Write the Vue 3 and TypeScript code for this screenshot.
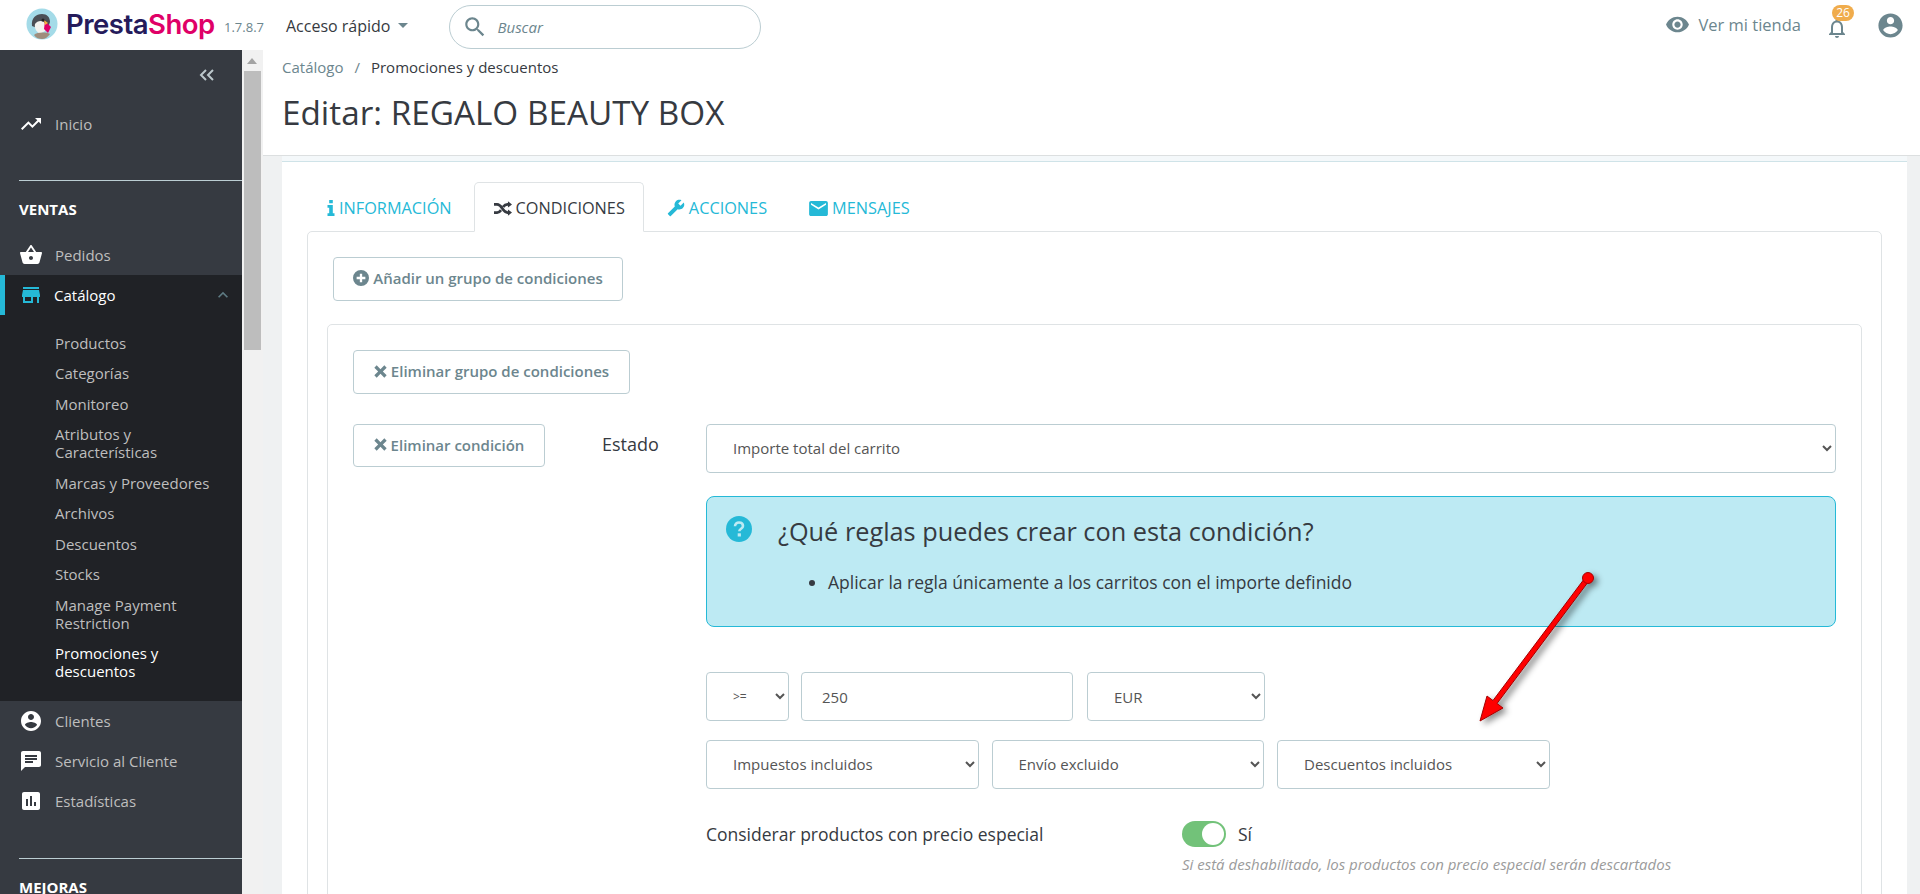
<script setup lang="ts">
interface NavItem { label: string; d: string }
const icons: Record<string, string> = {
  trend: 'M16 6l2.29 2.29-4.88 4.88-4-4L2 16.59 3.41 18l6-6 4 4 6.3-6.29L22 12V6z',
  basket: 'M17.21 9l-4.38-6.56c-.19-.28-.51-.42-.83-.42-.32 0-.64.14-.83.43L6.79 9H2c-.55 0-1 .45-1 1 0 .09.01.18.04.27l2.54 9.27c.23.84 1 1.46 1.92 1.46h13c.92 0 1.69-.62 1.93-1.46l2.54-9.27L23 10c0-.55-.45-1-1-1h-4.79zM9 9l3-4.4L15 9H9zm3 8c-1.1 0-2-.9-2-2s.9-2 2-2 2 .9 2 2-.9 2-2 2z',
  store: 'M20 4H4v2h16V4zm1 10v-2l-1-5H4l-1 5v2h1v6h10v-6h4v6h2v-6h1zm-9 4H6v-4h6v4z',
  account: 'M12 2C6.48 2 2 6.48 2 12s4.48 10 10 10 10-4.48 10-10S17.52 2 12 2zm0 3c1.66 0 3 1.34 3 3s-1.34 3-3 3-3-1.34-3-3 1.34-3 3-3zm0 14.2c-2.5 0-4.71-1.28-6-3.22.03-1.99 4-3.08 6-3.08 1.99 0 5.97 1.09 6 3.08-1.29 1.94-3.5 3.22-6 3.22z',
  chat: 'M20 2H4c-1.1 0-1.99.9-1.99 2L2 22l4-4h14c1.1 0 2-.9 2-2V4c0-1.1-.9-2-2-2zM6 9h12v2H6V9zm8 5H6v-2h8v2zm4-6H6V6h12v2z',
  stats: 'M19 3H5c-1.1 0-2 .9-2 2v14c0 1.1.9 2 2 2h14c1.1 0 2-.9 2-2V5c0-1.1-.9-2-2-2zM9 17H7v-7h2v7zm4 0h-2V7h2v10zm4 0h-2v-4h2v4z',
  eye: 'M12 4.5C7 4.5 2.73 7.61 1 12c1.73 4.39 6 7.5 11 7.5s9.27-3.11 11-7.5c-1.73-4.39-6-7.5-11-7.5zM12 17c-2.76 0-5-2.24-5-5s2.24-5 5-5 5 2.24 5 5-2.24 5-5 5zm0-8c-1.66 0-3 1.34-3 3s1.34 3 3 3 3-1.34 3-3-1.34-3-3-3z',
  bell: 'M12 22c1.1 0 2-.9 2-2h-4c0 1.1.89 2 2 2zm6-6v-5c0-3.07-1.64-5.64-4.5-6.32V4c0-.83-.67-1.5-1.5-1.5s-1.5.67-1.5 1.5v.68C7.63 5.36 6 7.92 6 11v5l-2 2v1h16v-1l-2-2zm-2 1H8v-6c0-2.48 1.51-4.5 4-4.5s4 2.02 4 4.5v6z',
  search: 'M15.5 14h-.79l-.28-.27C15.41 12.59 16 11.11 16 9.5 16 5.91 13.09 3 9.5 3S3 5.91 3 9.5 5.91 16 9.5 16c1.61 0 3.09-.59 4.23-1.57l.27.28v.79l5 4.99L20.49 19l-4.99-5zm-6 0C7.01 14 5 11.99 5 9.5S7.01 5 9.5 5 14 7.01 14 9.5 11.99 14 9.5 14z',
  up: 'M7.41 15.41L12 10.83l4.59 4.58L18 14l-6-6-6 6z',
  wrench: 'M22.7 19l-9.1-9.1c.9-2.3.4-5-1.5-6.9-2-2-5-2.4-7.4-1.3L9 6 6 9 1.6 4.7C.4 7.1.9 10.1 2.9 12.1c1.9 1.9 4.6 2.4 6.9 1.5l9.1 9.1c.4.4 1 .4 1.4 0l2.3-2.3c.5-.4.5-1.1.1-1.4z',
  mail: 'M20 4H4c-1.1 0-1.99.9-1.99 2L2 18c0 1.1.9 2 2 2h16c1.1 0 2-.9 2-2V6c0-1.1-.9-2-2-2zm0 4l-8 5-8-5V6l8 5 8-5v2z',
  plus: 'M12 1a11 11 0 1 0 0 22 11 11 0 0 0 0-22zm6 12.6h-4.4V18h-3.2v-4.4H6v-3.2h4.4V6h3.2v4.4H18z',
  times: 'M4.4 7.3 7.3 4.4 12 9.1l4.7-4.7 2.9 2.9L14.900 12l4.700 4.700-2.900 2.900L12 14.900l-4.700 4.700-2.900-2.900L9.100 12z'
}
const subItems: string[] = [
  'Productos', 'Categorías', 'Monitoreo', 'Atributos y Características', 'Marcas y Proveedores',
  'Archivos', 'Descuentos', 'Stocks', 'Manage Payment Restriction'
]
const afterCatalog: NavItem[] = [
  { label: 'Clientes', d: icons.account },
  { label: 'Servicio al Cliente', d: icons.chat },
  { label: 'Estadísticas', d: icons.stats }
]
</script>

<template>
  <div class="app">
    <header class="topbar">
      <svg class="logo" viewBox="0 0 32 32" width="32" height="32">
        <circle cx="16" cy="16" r="15.500" fill="#a4dbe8" />
        <path d="M6 18c-1-8 4-12 10-12 5 0 8 3 8 8l-1 3-9-2-3 5z" fill="#4b4f55" />
        <path d="M9 16c2-3 6-4 9-2l2 3-1 6-5 3c-3-2-6-5-5-10z" fill="#f4f3ef" />
        <path d="M19 13l6 6-3 6-4-4z" fill="#df0067" />
        <path d="M18 12l4 3-3 2z" fill="#f6b33c" />
        <path d="M8 27c3-3 12-3 16-1-2 3-5 5-8 5s-6-1-8-4z" fill="#9f8d7c" />
        <circle cx="17" cy="12" r="1.500" fill="#222" />
      </svg>
      <div class="wordmark"><span class="presta">Presta</span><span class="shop">Shop</span></div>
      <span class="version">1.7.8.7</span>
      <span class="quick">Acceso rápido<i class="caret"></i></span>
      <div class="search">
        <svg viewBox="0 0 24 24" width="26" height="26"><path :d="icons.search" fill="#6c868e" /></svg>
        <em>Buscar</em>
      </div>
      <div class="top-right">
        <svg class="eye" viewBox="0 0 24 24" width="25" height="25"><path :d="icons.eye" fill="#6c868e" /></svg>
        <span class="store-link">Ver mi tienda</span>
        <div class="bell">
          <svg viewBox="0 0 24 24" width="24" height="24"><path :d="icons.bell" fill="#6c868e" /></svg>
          <span class="badge">26</span>
        </div>
        <svg class="avatar" viewBox="0 0 24 24" width="29" height="29"><path :d="icons.account" fill="#6c868e" /></svg>
      </div>
    </header>

    <div class="body">
      <nav class="sidebar">
        <div class="collapse">
          <svg viewBox="0 0 16 12" width="16" height="12"><path d="M7 1 2 6l5 5M14 1 9 6l5 5" fill="none" stroke="#bcc8cc" stroke-width="2" /></svg>
        </div>
        <div class="nav-item home">
          <svg viewBox="0 0 24 24" width="24" height="24"><path :d="icons.trend" fill="#fff" /></svg>
          <span>Inicio</span>
        </div>
        <div class="rule first"></div>
        <div class="section">VENTAS</div>
        <div class="nav-item">
          <svg viewBox="0 0 24 24" width="24" height="24"><path :d="icons.basket" fill="#fff" /></svg>
          <span>Pedidos</span>
        </div>
        <div class="catalog">
          <div class="catalog-head">
            <svg viewBox="0 0 24 24" width="24" height="24"><path :d="icons.store" fill="#25b9d7" /></svg>
            <span>Catálogo</span>
            <svg class="chev" viewBox="0 0 24 24" width="20" height="20"><path :d="icons.up" fill="#5e7b83" /></svg>
          </div>
          <ul class="sub">
            <li v-for="s in subItems" :key="s">{{ s }}</li>
            <li class="current">Promociones y descuentos</li>
          </ul>
        </div>
        <div v-for="item in afterCatalog" :key="item.label" class="nav-item">
          <svg viewBox="0 0 24 24" width="24" height="24"><path :d="item.d" fill="#fff" /></svg>
          <span>{{ item.label }}</span>
        </div>
        <div class="rule second"></div>
        <div class="section">MEJORAS</div>
      </nav>

      <div class="scroll"><i class="scroll-up"></i><div class="thumb"></div></div>

      <main class="main">
        <div class="page-head">
          <div class="crumbs"><span class="c1">Catálogo</span><span class="slash">/</span><span class="c2">Promociones y descuentos</span></div>
          <h1>Editar: REGALO BEAUTY BOX</h1>
        </div>
        <div class="content">
          <div class="card">
            <div class="band"></div>
            <div class="card-body">
              <ul class="tabs">
                <li>
                  <svg viewBox="0 0 8 16" width="8" height="16"><path d="M2.200 0h3.600v3.200H2.200zM.5 5h5.300v8.200h1.700V16H.5v-2.800h1.700V7.800H.5z" fill="#25b9d7" /></svg>
                  INFORMACIÓN
                </li>
                <li class="active">
                  <svg viewBox="0 0 20 16" width="18" height="15"><path d="M0 3.500h3.500C9 3.500 9.500 12.500 15 12.500h1M0 12.500h3.500c2 0 3.200-1.200 4.300-2.700M10.200 6.200C11.300 4.700 13 3.500 15 3.500h1" fill="none" stroke="#363a41" stroke-width="3" /><path d="M15.500 0 20 3.500 15.500 7zM15.500 9 20 12.500 15.500 16z" fill="#363a41" /></svg>
                  CONDICIONES
                </li>
                <li>
                  <svg viewBox="0 0 24 24" width="18" height="18"><path :d="icons.wrench" fill="#25b9d7" transform="matrix(-1 0 0 1 24 0)" /></svg>
                  ACCIONES
                </li>
                <li>
                  <svg viewBox="2 4 20 16" width="19" height="15"><path :d="icons.mail" fill="#25b9d7" /></svg>
                  MENSAJES
                </li>
              </ul>
              <div class="panel">
                <button class="btn add">
                  <svg viewBox="1 1 22 22" width="16" height="16"><path :d="icons.plus" fill="#6c868e" /></svg>
                  Añadir un grupo de condiciones
                </button>
                <section class="group">
                  <button class="btn del-group">
                    <svg viewBox="4 4 16 16" width="13" height="13"><path :d="icons.times" fill="#6c868e" /></svg>
                    Eliminar grupo de condiciones
                  </button>
                  <div class="cond">
                    <button class="btn del-cond">
                      <svg viewBox="4 4 16 16" width="13" height="13"><path :d="icons.times" fill="#6c868e" /></svg>
                      Eliminar condición
                    </button>
                    <label class="estado">Estado</label>
                    <div class="cond-body">
                      <select class="field full"><option>Importe total del carrito</option></select>
                      <div class="alert">
                        <svg class="q" viewBox="0 0 26 26" width="26" height="26">
                          <circle cx="13" cy="13" r="13" fill="#25b9d7" />
                          <path d="M9 10.200c0-2.400 1.800-3.700 4-3.700s4 1.300 4 3.400c0 2.900-3.700 2.700-3.700 5.300" fill="none" stroke="#bdeaf3" stroke-width="2.600" />
                          <rect x="11.700" y="17.300" width="3.200" height="3.200" fill="#bdeaf3" />
                        </svg>
                        <div>
                          <h4>¿Qué reglas puedes crear con esta condición?</h4>
                          <ul><li>Aplicar la regla únicamente a los carritos con el importe definido</li></ul>
                        </div>
                      </div>
                      <div class="row one">
                        <select class="field op"><option>&gt;=</option></select>
                        <input class="field amount" value="250" />
                        <select class="field cur"><option>EUR</option></select>
                      </div>
                      <div class="row two">
                        <select class="field third"><option>Impuestos incluidos</option></select>
                        <select class="field third"><option>Envío excluido</option></select>
                        <select class="field third"><option>Descuentos incluidos</option></select>
                      </div>
                      <div class="special">
                        <span class="sp-label">Considerar productos con precio especial</span>
                        <div>
                          <div class="switch-line"><span class="switch"><i></i></span><span>Sí</span></div>
                          <p class="hint">Si está deshabilitado, los productos con precio especial serán descartados</p>
                        </div>
                      </div>
                    </div>
                  </div>
                </section>
              </div>
            </div>
          </div>
        </div>
      </main>
    </div>

    <svg class="arrow" viewBox="0 0 150 190" width="150" height="190">
      <defs><filter id="sh" x="-20%" y="-20%" width="150%" height="150%"><feDropShadow dx="4" dy="3" stdDeviation="3" flood-color="#000" flood-opacity=".45" /></filter></defs>
      <g filter="url(#sh)">
        <path d="M116 16.500 120 19.500 27 143.500 33 148 10 161 17 136 23 140.500z" fill="#f00" stroke="#a30000" stroke-width="1" />
        <circle cx="118" cy="18" r="5.500" fill="#f00" stroke="#a30000" stroke-width="1" />
      </g>
    </svg>
  </div>
</template>

<style scoped>
.app {
  position: relative;
  width: 1920px;
  height: 894px;
  overflow: hidden;
  display: flex;
  flex-direction: column;
  font-family: "Open Sans", sans-serif;
  font-size: 15px;
  color: #363a41;
  background: #fff;
}
svg { display: block; flex: none; }
ul { list-style: none; margin: 0; padding: 0; }

.topbar { height: 50px; flex: none; display: flex; align-items: center; padding-left: 26px; background: #fff; }
.logo { margin-top: -2px; }
.wordmark { margin-left: 8px; font-family: Inter, sans-serif; font-weight: 600; font-size: 27.500px; letter-spacing: -.5px; line-height: 48px; margin-top: -3px; width: 153px; }
.presta { color: #251b5b; }
.shop { color: #df0067; }
.version { margin-left: 5px; font-size: 13px; color: #6c868e; margin-top: 3px; }
.quick { margin-left: 22px; color: #363a41; font-size: 16px; display: flex; align-items: center; margin-top: 1px; }
.caret { margin-left: 7px; border: 5px solid transparent; border-top-color: #6c868e; border-bottom: 0; }
.search { margin-left: 41px; margin-top: 4px; width: 312px; height: 44px; box-sizing: border-box; border: 1px solid #bbcdd2; border-radius: 22px; display: flex; align-items: center; padding-left: 12px; }
.search em { margin-left: 10px; font-size: 15px; color: #6c868e; }
.top-right { margin-left: auto; display: flex; align-items: center; padding-right: 15px; margin-top: -1px; }
.store-link { margin-left: 8px; font-size: 16.500px; color: #6c868e; }
.bell { position: relative; margin-left: 24px; margin-top: 6px; }
.badge { position: absolute; left: 7px; top: -11px; width: 22px; height: 16px; border-radius: 8px; background: #f0ac4c; color: #fff; font-size: 12px; line-height: 16px; text-align: center; }
.avatar { margin-left: 27px; margin-top: 1px; }

.body { flex: 1; display: flex; min-height: 0; }

.sidebar { width: 242px; flex: none; background: #363a41; color: #bebebe; }
.collapse { height: 50px; display: flex; align-items: center; justify-content: flex-end; padding-right: 27px; box-sizing: border-box; }
.nav-item { height: 40px; display: flex; align-items: center; padding-left: 19px; }
.nav-item span { margin-left: 12px; }
.nav-item.home { height: 50px; box-sizing: border-box; padding-bottom: 2px; }
.rule { height: 1px; background: #bbcdd2; margin-left: 19px; }
.rule.first { margin-top: 30px; }
.rule.second { margin-top: 37px; }
.section { height: 54px; box-sizing: border-box; padding: 18px 0 0 19px; color: #fff; font-weight: 700; font-size: 15px; line-height: 20px; }
.catalog { background: #202226; padding-bottom: 14.500px; }
.catalog-head { height: 40px; display: flex; align-items: center; color: #fff; border-left: 5px solid #25b9d7; padding-left: 14px; }
.catalog-head span { margin-left: 11px; }
.chev { margin-left: auto; margin-right: 9px; }
.sub { padding: 12.500px 25px 0 55px; }
.sub li { padding: 6.25px 0; line-height: 18px; }
.sub li.current { color: #fff; }

.scroll { width: 21px; flex: none; background: #f1f1f1; position: relative; }
.scroll-up { position: absolute; left: 5px; top: 8px; border: 5px solid transparent; border-bottom: 6px solid #a3a3a3; border-top: 0; }
.thumb { position: absolute; left: 2px; right: 2px; top: 21px; height: 279px; background: #bdbdbd; }

.main { flex: 1; min-width: 0; display: flex; flex-direction: column; }
.page-head { height: 106px; flex: none; box-sizing: border-box; border-bottom: 1px solid #dcdfe0; padding: 8px 0 0 19px; }
.crumbs { font-size: 15px; line-height: 19px; }
.c1 { color: #6c868e; }
.slash { color: #6c868e; margin: 0 11px; }
h1 { margin: 13px 0 0; font-weight: 400; font-size: 33.300px; line-height: 44px; color: #363a41; }
.content { flex: 1; background: #eff1f2; padding: 0 13px 0 19px; min-height: 0; }
.card { background: #fff; height: 100%; }
.band { height: 5px; background: #f4f8fa; border-bottom: 1px solid #cfe3e8; }
.card-body { padding: 20px 25px 0; }

.tabs { display: flex; position: relative; z-index: 1; margin-bottom: -1px; }
.tabs li { height: 50px; box-sizing: border-box; margin-right: 3px; padding: 2px 18px 0 19px; display: flex; align-items: center; gap: 4px; color: #25b9d7; font-size: 16.300px; border: 1px solid transparent; }
.tabs li.active { color: #363a41; background: #fff; border-color: #dfe3e5; border-bottom-color: #fff; border-radius: 5px 5px 0 0; }
.panel { border: 1px solid #dfe3e5; border-radius: 5px; padding: 25px 19px 0; height: 700px; box-sizing: border-box; }

.btn { display: inline-flex; align-items: center; gap: 4px; box-sizing: border-box; background: #fff; border: 1px solid #bbcdd2; border-radius: 4px; color: #6c868e; font: 600 15px "Open Sans", sans-serif; padding: 0 0 2px; height: 44px; }
.add { margin-left: 6px; width: 290px; justify-content: center; }
.group { margin-top: 23px; border: 1px solid #dfe3e5; border-radius: 5px; padding: 25px 25px 0; height: 600px; box-sizing: border-box; }
.del-group { width: 277px; justify-content: center; }
.cond { display: grid; grid-template-columns: 249px 104px 1fr; margin-top: 30px; align-items: start; }
.del-cond { width: 192px; height: 43px; justify-content: center; }
.estado { font-size: 18px; line-height: 41px; }
.cond-body { min-width: 0; }
.field { box-sizing: border-box; height: 49px; background: #fff; border: 1px solid #bbcdd2; border-radius: 4px; color: #555; font: 15px "Open Sans", sans-serif; padding: 0 4px 2px 22px; outline: none; }
.full { width: 100%; }
.alert { margin-top: 23px; height: 131px; box-sizing: border-box; background: #bdeaf3; border: 1px solid #25b9d7; border-radius: 8px; display: flex; padding: 19px 0 0 19px; gap: 26px; }
.alert h4 { margin: 0; font-weight: 400; font-size: 25.300px; line-height: 30px; color: #363a41; }
.alert ul { list-style: disc; margin: 25px 0 0 50px; padding: 0; font-size: 17.500px; line-height: 22px; }
.row { display: flex; }
.row.one { margin-top: 45px; gap: 12px; }
.row.one .field { padding-bottom: 0; }
.row.two { margin-top: 19px; gap: 13px; }
.op { width: 83px; font-size: 12px; }
.amount { width: 272px; padding-left: 20px; }
.cur { width: 178px; margin-left: 2px; }
.third { width: 272.500px; }
.special { display: grid; grid-template-columns: 476px 1fr; margin-top: 32px; font-size: 17.500px; }
.sp-label { line-height: 26px; }
.switch-line { display: flex; align-items: center; gap: 12px; height: 26px; }
.switch { width: 44px; height: 26px; box-sizing: border-box; border-radius: 13px; background: #72c279; display: flex; justify-content: flex-end; padding: 2px; }
.switch i { width: 22px; height: 22px; border-radius: 50%; background: #fff; }
.hint { margin: 8px 0 0; font-size: 15px; font-style: italic; line-height: 18px; color: #9b9b9b; }

.arrow { position: absolute; left: 1470px; top: 560px; pointer-events: none; }
</style>

<style>
html, body { margin: 0; overflow: hidden; }
</style>
